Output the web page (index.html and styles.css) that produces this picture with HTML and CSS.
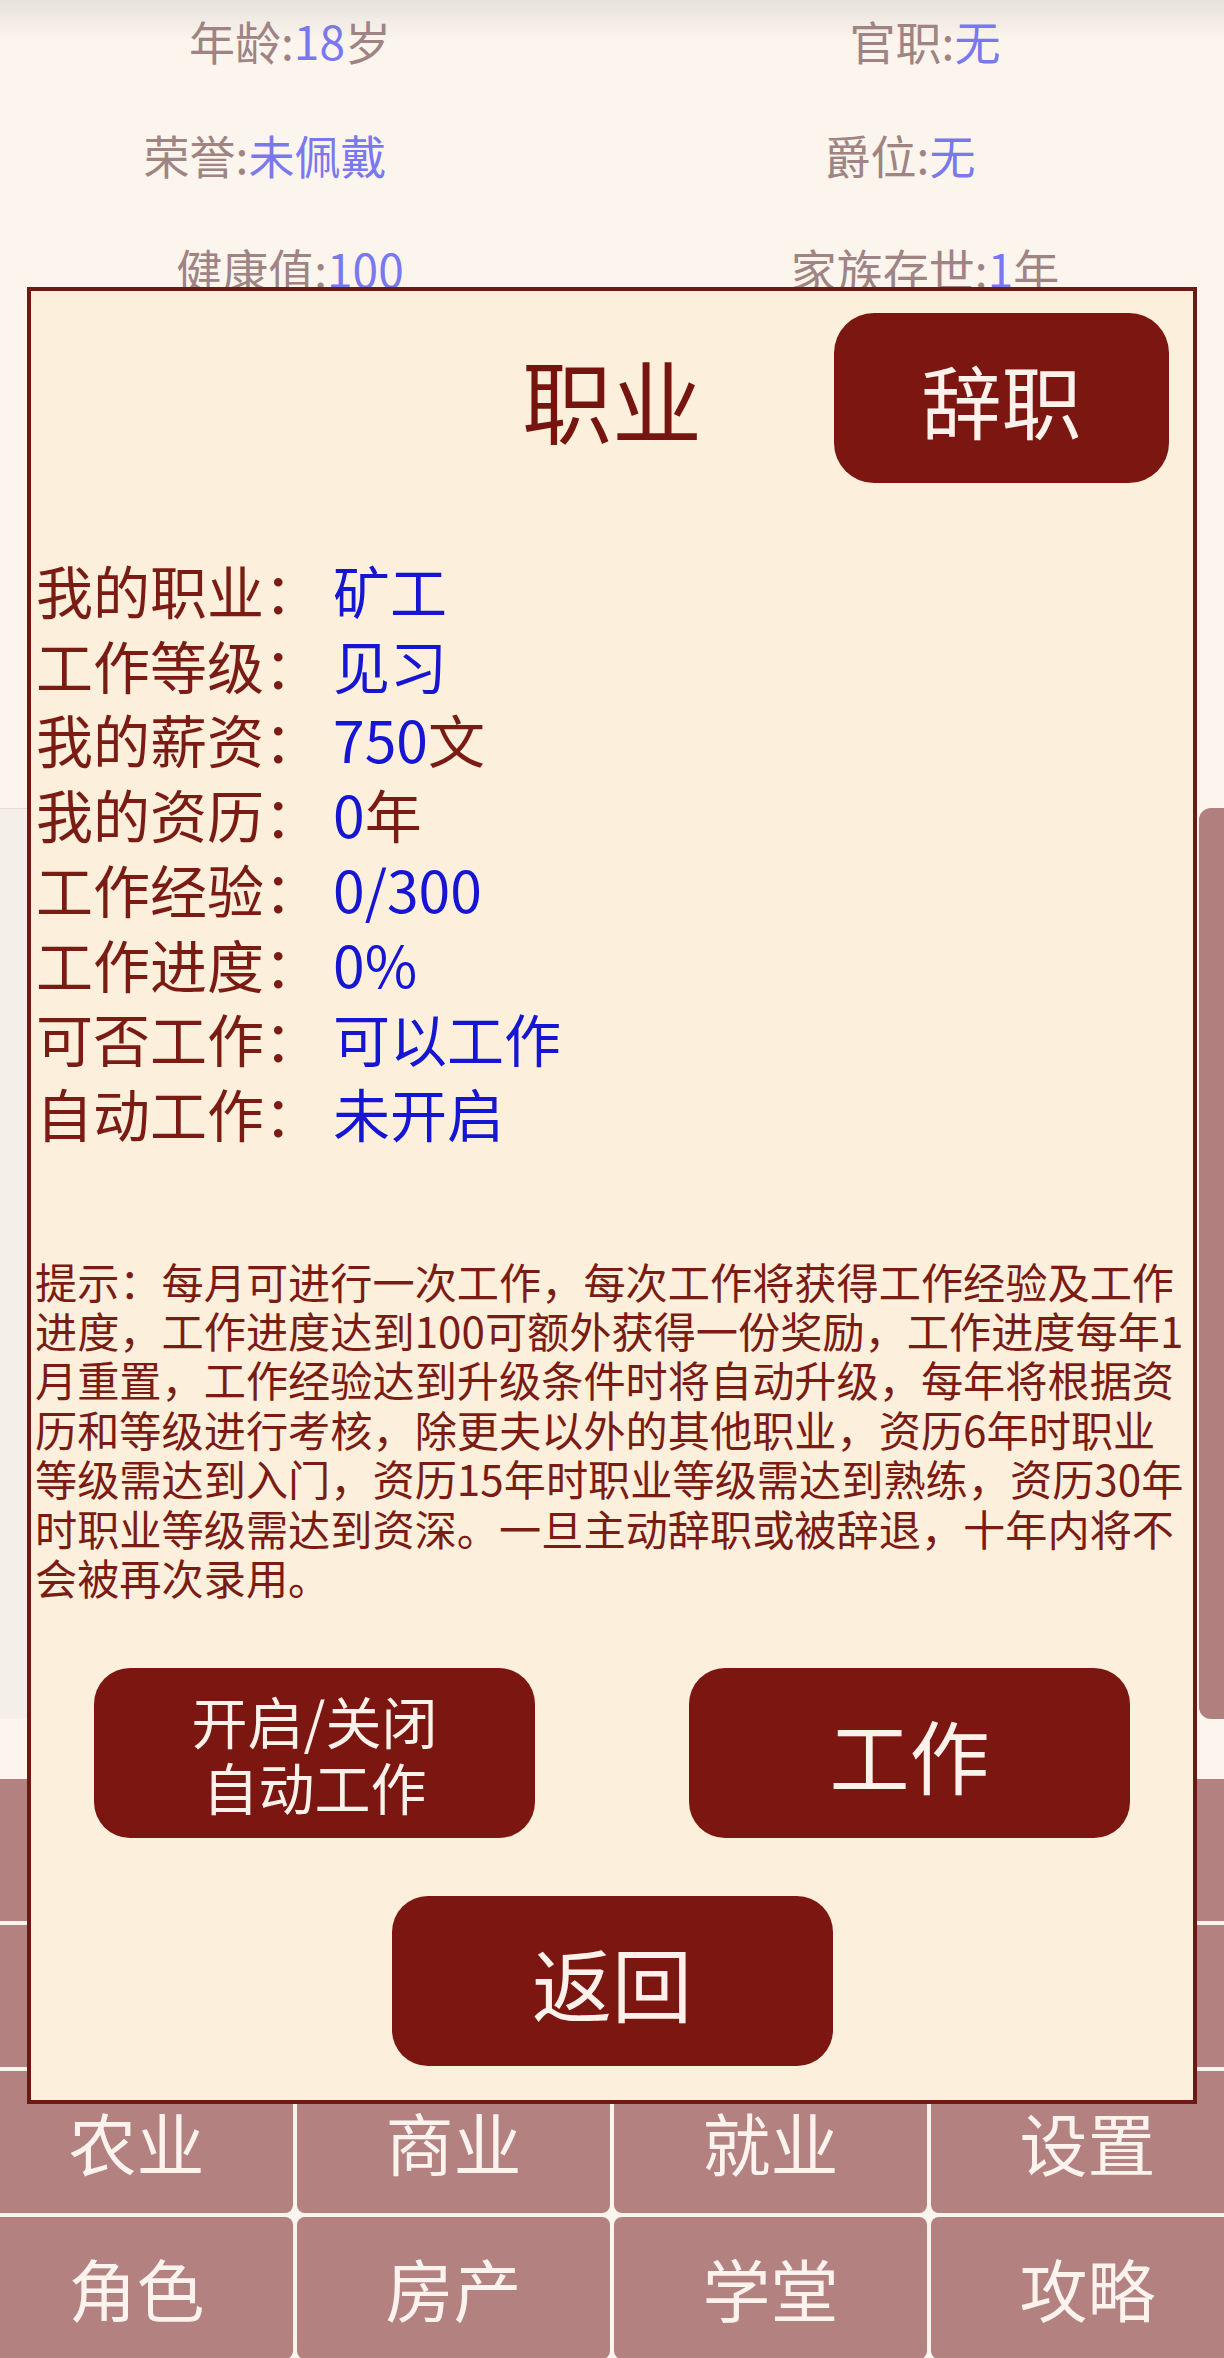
FILE: index.html
```html
<!DOCTYPE html>
<html lang="zh-CN">
<head>
<meta charset="utf-8">
<title>职业</title>
<link rel="stylesheet" href="styles.css">
</head>
<body>
<div class="page">
  <div class="stats">
    <div class="stat l"><span>年龄:</span><span class="v">18</span><span>岁</span></div>
    <div class="stat r"><span>官职:</span><span class="v">无</span></div>
    <div class="stat l2"><span>荣誉:</span><span class="v">未佩戴</span></div>
    <div class="stat r2"><span>爵位:</span><span class="v">无</span></div>
    <div class="stat l"><span>健康值:</span><span class="v">100</span></div>
    <div class="stat r"><span>家族存世:</span><span class="v">1</span><span>年</span></div>
  </div>

  <div class="middle">
    <div class="card"></div>
    <div class="side"></div>
  </div>

  <nav class="nav">
    <div class="cell"></div><div class="cell"></div><div class="cell"></div><div class="cell"></div>
    <div class="cell"></div><div class="cell"></div><div class="cell"></div><div class="cell"></div>
    <div class="cell">农业</div><div class="cell">商业</div><div class="cell">就业</div><div class="cell">设置</div>
    <div class="cell">角色</div><div class="cell">房产</div><div class="cell">学堂</div><div class="cell">攻略</div>
  </nav>

  <div class="modal">
    <div class="head">
      <div class="title">职业</div>
      <div class="btn btn-resign">辞职</div>
    </div>

    <div class="info">
      <div>我的职业：</div><div class="val">矿工</div>
      <div>工作等级：</div><div class="val">见习</div>
      <div>我的薪资：</div><div><span class="val">750</span>文</div>
      <div>我的资历：</div><div><span class="val">0</span>年</div>
      <div>工作经验：</div><div class="val">0/300</div>
      <div>工作进度：</div><div class="val">0%</div>
      <div>可否工作：</div><div class="val">可以工作</div>
      <div>自动工作：</div><div class="val">未开启</div>
    </div>

    <p class="hint">提示：每月可进行一次工作，每次工作将获得工作经验及工作<br>进度，工作进度达到100可额外获得一份奖励，工作进度每年1<br>月重置，工作经验达到升级条件时将自动升级，每年将根据资<br>历和等级进行考核，除更夫以外的其他职业，资历6年时职业<br>等级需达到入门，资历15年时职业等级需达到熟练，资历30年<br>时职业等级需达到资深。一旦主动辞职或被辞退，十年内将不<br>会被再次录用。</p>

    <div class="actions">
      <div class="btn btn-wide btn-two">开启/关闭<br>自动工作</div>
      <div class="btn btn-wide">工作</div>
    </div>
    <div class="back-row">
      <div class="btn btn-wide">返回</div>
    </div>
  </div>
</div>
</body>
</html>
```

FILE: styles.css
```css
html, body {
  margin: 0;
  padding: 0;
}

body {
  font-family: "Noto Sans CJK SC", "Noto Sans", sans-serif;
  background: #fbf5ed;
}

.page {
  position: relative;
  width: 1224px;
  height: 2358px;
  overflow: hidden;
  background: linear-gradient(#e7e2dc 0, #fbf5ed 42px, #fbf5ed 100%);
}

/* top stats (behind modal) */
.stats {
  display: grid;
  grid-template-columns: 1fr 1fr;
  grid-auto-rows: 114px;
  margin-top: -17px;
}

.stat {
  display: flex;
  align-items: center;
  justify-content: center;
  font-size: 46px;
  color: #a08383;
  line-height: 1;
}

.stat.l {
  padding-right: 32px;
}

.stat.r {
  padding-left: 14px;
}

.stat.l2 {
  padding-right: 82px;
}

.stat.r2 {
  padding-right: 36px;
}

.stat .v {
  color: #7a78ee;
}

/* middle area (behind modal) */
.middle {
  display: flex;
  gap: 6px;
  margin-top: 483px;
  margin-right: -35px;
  height: 911px;
}

.card {
  flex: 1;
  background: #f4efe8;
  border-top: 1px solid #e4dcd3;
}

.side {
  width: 60px;
  background: #b17f7e;
  border-radius: 12px;
}

/* bottom navigation */
.nav {
  display: grid;
  grid-template-columns: repeat(4, 313px);
  grid-auto-rows: 142px;
  gap: 4px;
  width: 1264px;
  margin: 60px 0 0 -20px;
}

.cell {
  display: flex;
  align-items: center;
  justify-content: center;
  background: #b38180;
  border-radius: 8px;
  color: #fcf2ee;
  font-size: 68px;
  line-height: 1;
}

/* modal */
.modal {
  position: absolute;
  left: 27px;
  top: 287px;
  width: 1170px;
  height: 1817px;
  box-sizing: border-box;
  border: 4px solid #6b1a14;
  background: #fcefdc;
  display: flex;
  flex-direction: column;
}

.head {
  display: grid;
  grid-template-columns: 1fr auto 1fr;
  align-items: center;
  height: 170px;
  margin-top: 22px;
}

.title {
  grid-column: 2;
  font-size: 90px;
  line-height: 1;
  color: #76150f;
}

.btn {
  display: flex;
  align-items: center;
  justify-content: center;
  text-align: center;
  background: #7c1610;
  color: #fdf1ec;
  border-radius: 36px;
  line-height: 1;
}

.btn-resign {
  grid-column: 3;
  justify-self: end;
  width: 335px;
  height: 170px;
  margin-right: 24px;
  font-size: 80px;
  border-radius: 40px;
}

.info {
  display: grid;
  grid-template-columns: auto 1fr;
  column-gap: 12px;
  margin-top: 69px;
  padding-left: 5px;
  font-size: 57px;
  line-height: 74.7px;
  color: #7b1c14;
}

.info .val {
  color: #1616d2;
}

.hint {
  margin: 106px 0 0 0;
  padding-left: 4px;
  font-size: 42.2px;
  line-height: 49.4px;
  color: #7b1c14;
  white-space: nowrap;
}

.actions {
  display: flex;
  justify-content: center;
  gap: 154px;
  margin-top: 67px;
}

.btn-wide {
  width: 441px;
  height: 170px;
  font-size: 80px;
}

.btn-two {
  font-size: 56px;
  line-height: 66px;
}

.back-row {
  display: flex;
  justify-content: center;
  margin-top: 58px;
}
```
